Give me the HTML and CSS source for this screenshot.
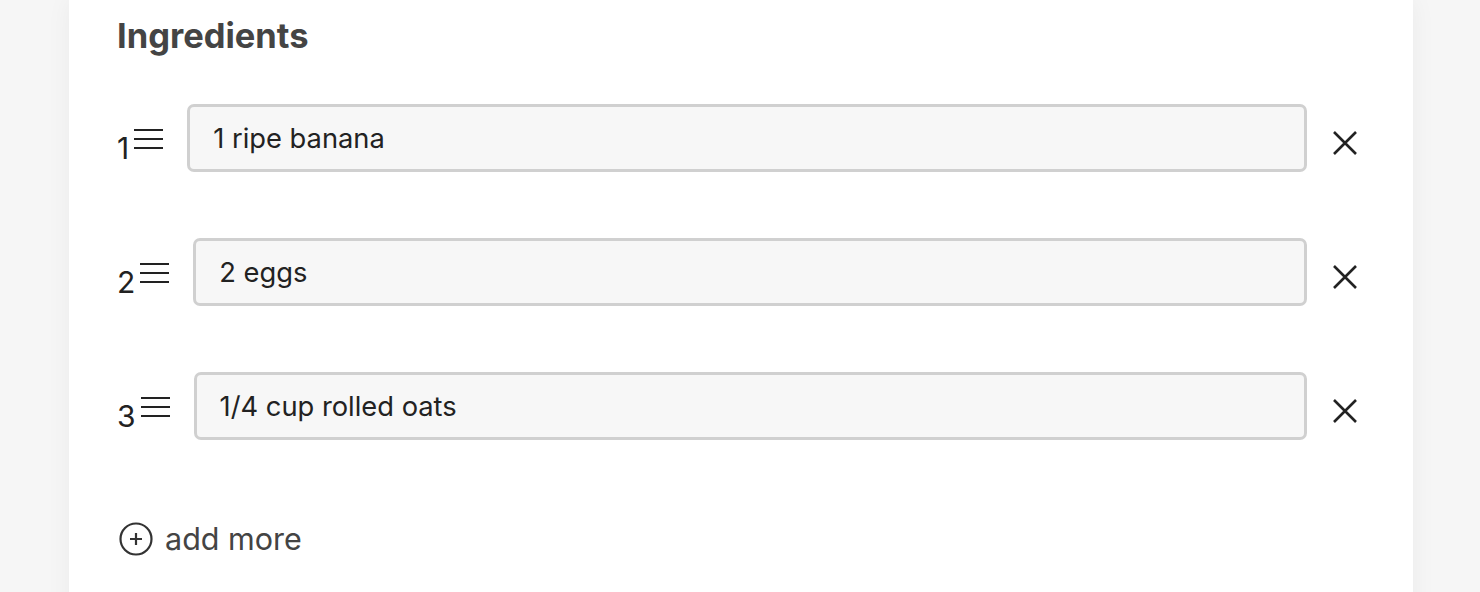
FILE: index.html
```html
<!DOCTYPE html>
<html lang="en">
<head>
    <meta charset="UTF-8">
    <title>Recipe editor</title>
    <link rel="stylesheet" href="styles.css">
</head>
<body>
    <div class="card">
        <h2 class="section-title">Ingredients</h2>

        <div class="ingredient">
            <div class="handle">
                <span class="num">1</span>
                <svg class="drag" width="29" height="22" viewBox="0 0 29 22"><path d="M0 2h29M0 11h29M0 20h29" stroke="#222" stroke-width="2.2" fill="none"/></svg>
            </div>
            <input class="ingredient-input" type="text" value="1 ripe banana">
            <button class="remove">
                <svg width="26" height="26" viewBox="0 0 26 26"><path d="M2 2l22 22M24 2L2 24" stroke="#222" stroke-width="2.6" fill="none"/></svg>
            </button>
        </div>

        <div class="ingredient">
            <div class="handle">
                <span class="num">2</span>
                <svg class="drag" width="29" height="22" viewBox="0 0 29 22"><path d="M0 2h29M0 11h29M0 20h29" stroke="#222" stroke-width="2.2" fill="none"/></svg>
            </div>
            <input class="ingredient-input" type="text" value="2 eggs">
            <button class="remove">
                <svg width="26" height="26" viewBox="0 0 26 26"><path d="M2 2l22 22M24 2L2 24" stroke="#222" stroke-width="2.6" fill="none"/></svg>
            </button>
        </div>

        <div class="ingredient">
            <div class="handle">
                <span class="num">3</span>
                <svg class="drag" width="29" height="22" viewBox="0 0 29 22"><path d="M0 2h29M0 11h29M0 20h29" stroke="#222" stroke-width="2.2" fill="none"/></svg>
            </div>
            <input class="ingredient-input" type="text" value="1/4 cup rolled oats">
            <button class="remove">
                <svg width="26" height="26" viewBox="0 0 26 26"><path d="M2 2l22 22M24 2L2 24" stroke="#222" stroke-width="2.6" fill="none"/></svg>
            </button>
        </div>

        <button class="add-more">
            <svg width="34" height="34" viewBox="0 0 34 34"><circle cx="17" cy="17" r="15.5" stroke="#333" stroke-width="2.2" fill="none"/><path d="M17 11v12M11 17h12" stroke="#333" stroke-width="2.2"/></svg>
            <span>add more</span>
        </button>
    </div>
</body>
</html>
```

FILE: styles.css
```css
body {
    margin: 0;
    background-color: #f6f6f6;
    font-family: Inter, "Liberation Sans", sans-serif;
    color: #222;
}
.card {
    margin-left: 69px;
    width: 1344px;
    height: 620px;
    box-sizing: border-box;
    padding: 14px 55px 0 48px;
    background-color: #ffffff;
    box-shadow: 0 0 24px rgba(0, 0, 0, 0.05);
}
.section-title {
    margin: 0 0 46px 0;
    font-size: 34.5px;
    font-weight: 700;
    color: #444;
    line-height: 44px;
}
.ingredient {
    display: flex;
    align-items: flex-start;
    margin-bottom: 66px;
}
.handle {
    display: flex;
    align-items: flex-start;
    margin-top: 24px;
    margin-right: 24px;
}
.num {
    font-size: 30px;
    line-height: 30px;
    margin-top: 5px;
    margin-right: 5px;
}
.ingredient-input {
    flex: 1;
    height: 68px;
    box-sizing: border-box;
    border: 3px solid #d0d0d0;
    border-radius: 7px;
    background-color: #f7f7f7;
    padding: 0 0 0 23px;
    font-family: inherit;
    font-size: 27.3px;
    color: #222;
}
.remove {
    background: transparent;
    border: none;
    padding: 0;
    margin: 26px 0 0 25px;
    width: 26px;
    height: 26px;
    cursor: pointer;
}
.add-more {
    display: flex;
    align-items: center;
    gap: 12px;
    background: transparent;
    border: none;
    padding: 0;
    margin: 80px 0 0 2px;
    font-family: inherit;
    font-size: 30.5px;
    color: #444;
    cursor: pointer;
}
```
